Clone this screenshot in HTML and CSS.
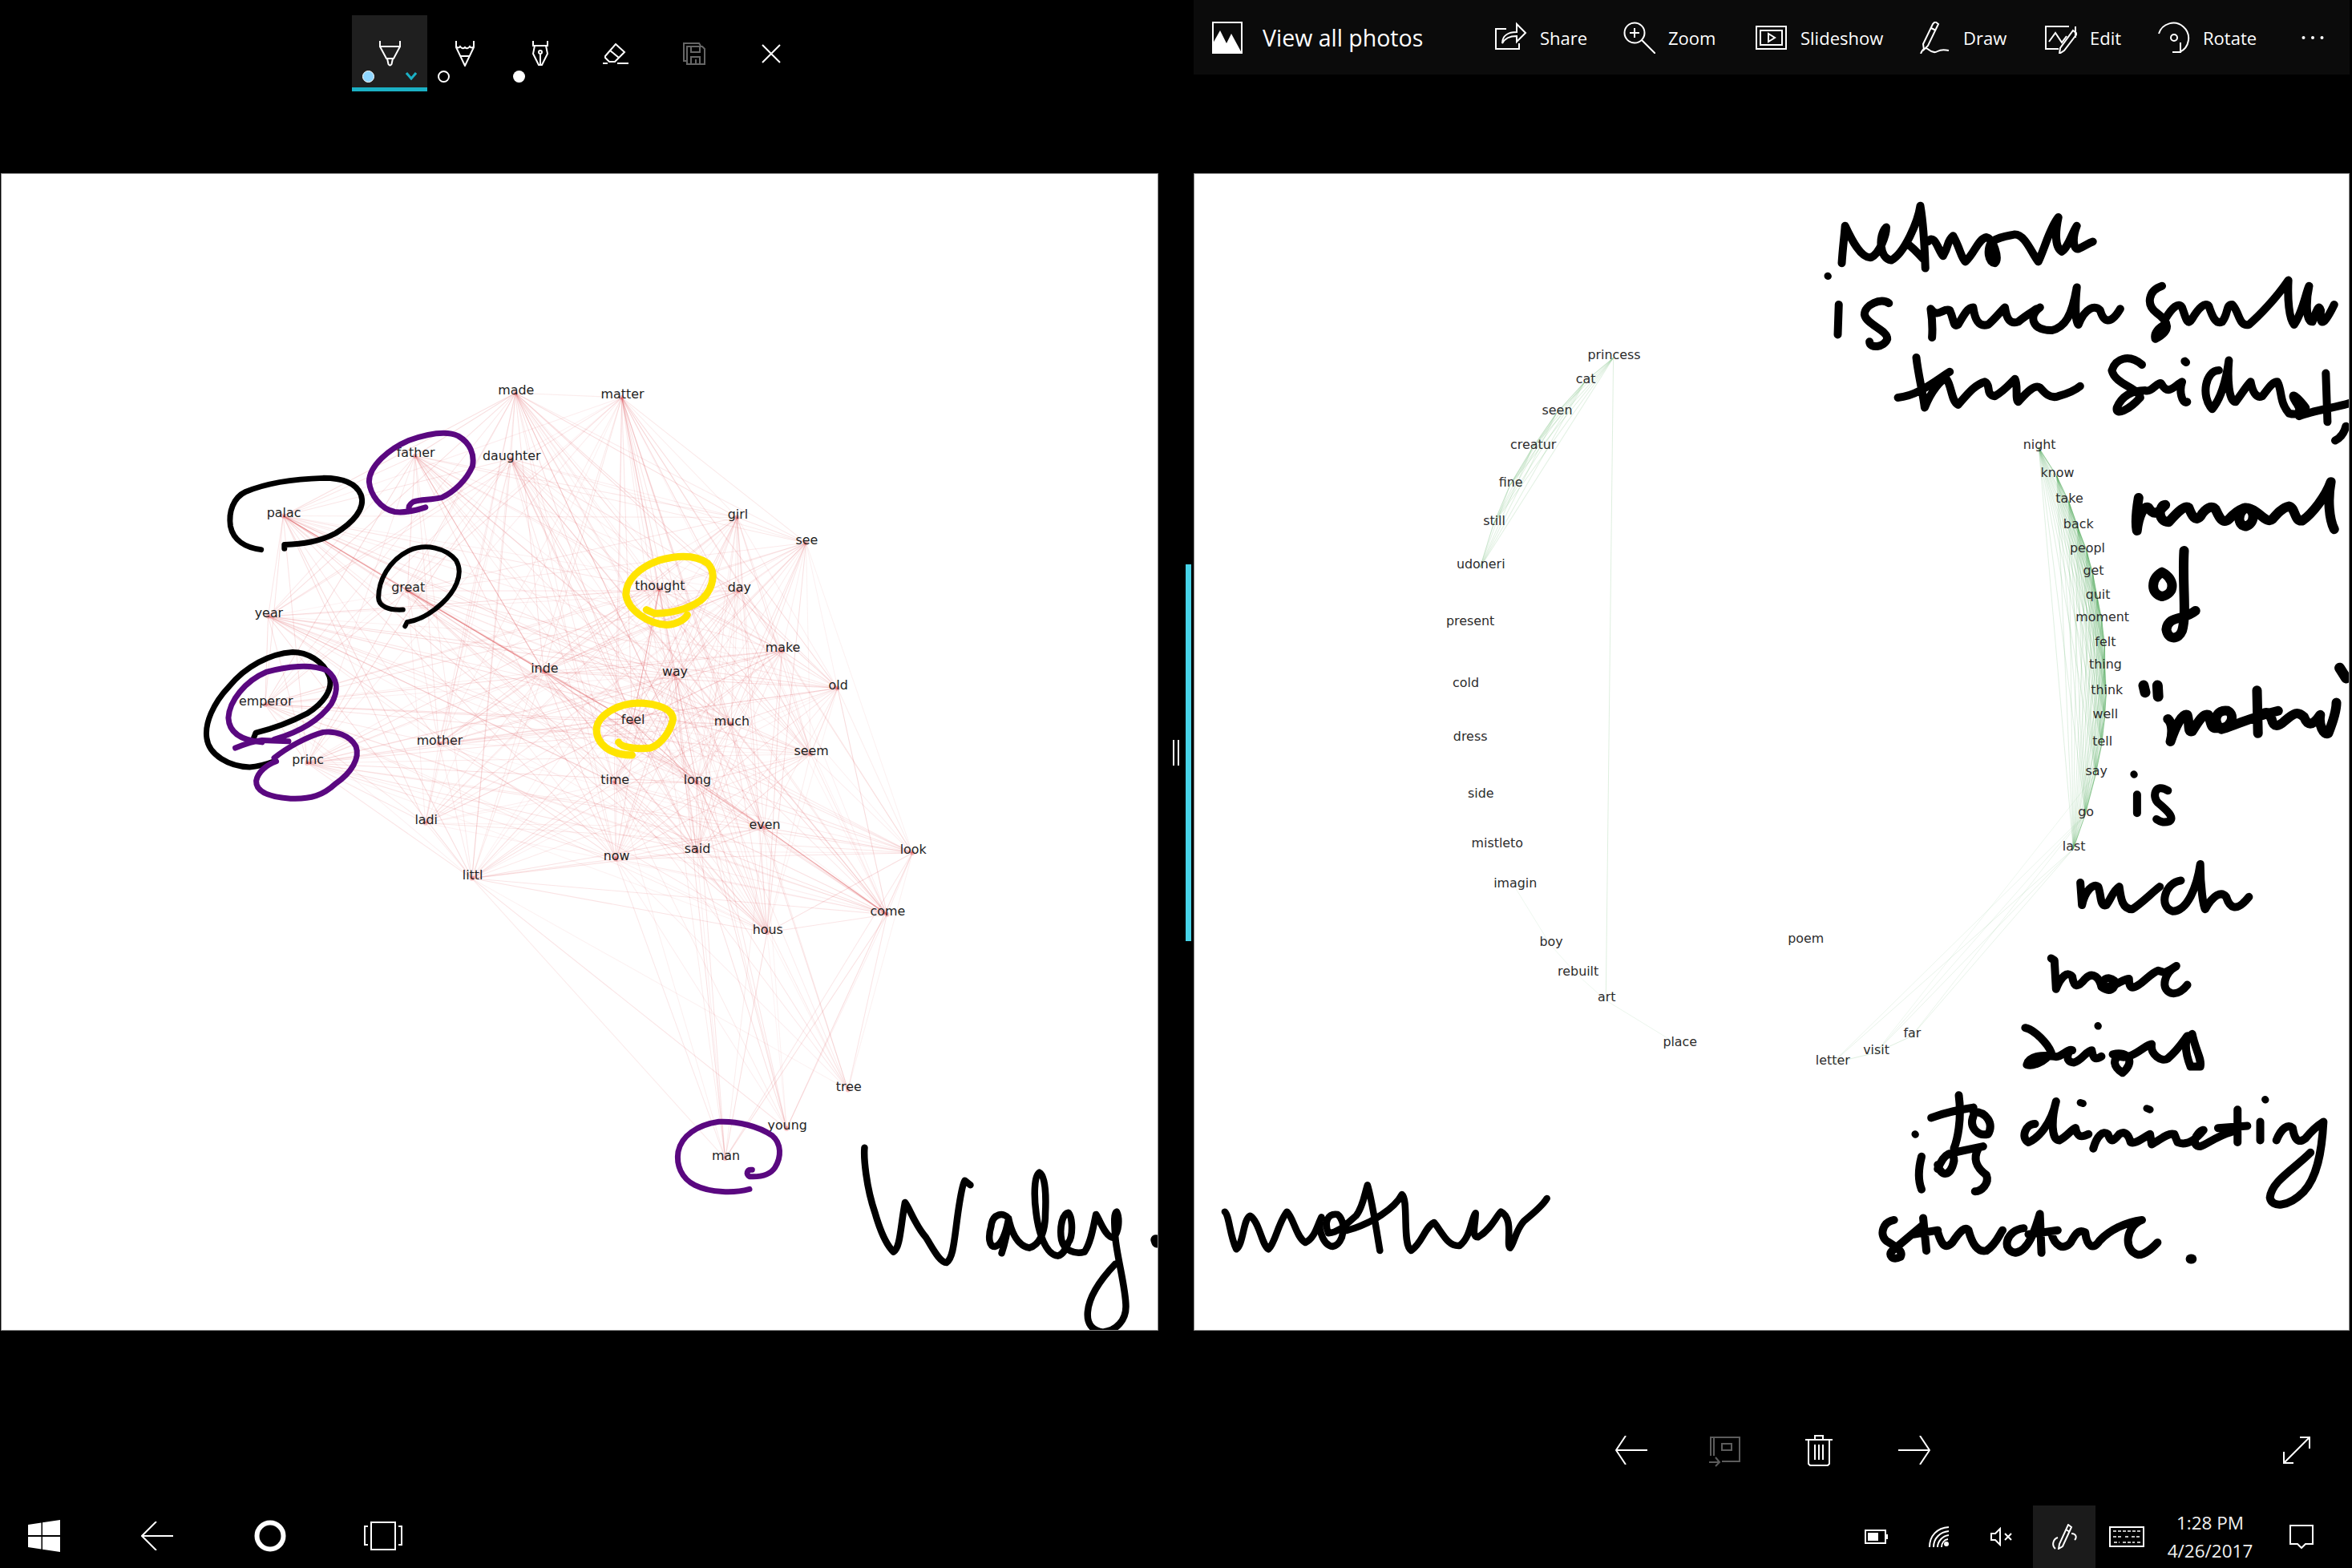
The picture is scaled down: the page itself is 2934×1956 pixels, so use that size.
FILE: index.html
```html
<!DOCTYPE html>
<html lang="en">
<head>
<meta charset="utf-8">
<title>Photos split view</title>
<link rel="stylesheet" href="styles.css">
</head>
<body>
<div class="app">
  <div class="split">
    <section class="window window-left">
      <div class="toolbar">
        <div class="inktools">
          <div class="tool tool-active">
            <svg class="ico pen" width="27" height="32" viewBox="0 0 27 32"><path d="M1 0V7H26V0M1 7L9 22H18L26 7M10 22L11.5 29Q13.5 32 15.5 29L17 22"/></svg>
            <div class="tool-row"><span class="dot dot-blue"></span><svg class="chev" width="14" height="10" viewBox="0 0 14 10"><path d="M1 1L7 8L13 1"/></svg></div>
          </div>
          <div class="tool">
            <svg class="ico pen" width="24" height="32" viewBox="0 0 24 32"><path d="M1 0V8L12 31L23 8V0M1 7Q4 10 6 7Q9 11 12 8Q15 11 18 7Q20 10 23 7M7 19H17"/></svg>
            <div class="tool-row"><span class="dot dot-ring"></span></div>
          </div>
          <div class="tool">
            <svg class="ico pen" width="20" height="32" viewBox="0 0 20 32"><path d="M1 0V6H19V0M3 6L1 16L8 30H12L19 16L17 6M10 30V17"/><circle cx="10" cy="14" r="2"/></svg>
            <div class="tool-row"><span class="dot dot-white"></span></div>
          </div>
          <div class="tool tool-plain">
            <svg class="ico" width="32" height="26" viewBox="0 0 32 26"><path d="M3 16L16 1L27 11L15 23H8L3 18ZM9 9L20 18M0 25H6M18 25H32"/></svg>
          </div>
          <div class="tool tool-plain tool-wide">
            <svg class="ico ico-off" width="28" height="28" viewBox="0 0 28 28"><path d="M4 23H1V1H20L22 4M5 5H24L27 8V27H5ZM10 5V12H21V5M10 27V18H21V27M16 21V27"/></svg>
          </div>
          <div class="tool tool-plain tool-close">
            <svg class="ico" width="24" height="24" viewBox="0 0 24 24"><path d="M1 1L23 23M23 1L1 23"/></svg>
          </div>
        </div>
      </div>
      <div class="panel">
        <svg class="graph graph-red" data-graph="red" viewBox="0.6 116 771.5 771.5">
          <g class="edges"></g>
          <text x="344" y="260">made</text><text x="415" y="263">matter</text><text x="277" y="302">father</text><text x="341" y="304">daughter</text><text x="492" y="343">girl</text><text x="189" y="342">palac</text><text x="538" y="360">see</text><text x="272" y="392">great</text><text x="440" y="391">thought</text><text x="493" y="392">day</text><text x="179" y="409">year</text><text x="522" y="432">make</text><text x="363" y="446">inde</text><text x="450" y="448">way</text><text x="559" y="457">old</text><text x="177" y="468">emperor</text><text x="422" y="480">feel</text><text x="488" y="481">much</text><text x="293" y="494">mother</text><text x="541" y="501">seem</text><text x="205" y="507">princ</text><text x="410" y="520">time</text><text x="465" y="520">long</text><text x="284" y="547">ladi</text><text x="510" y="550">even</text><text x="465" y="566">said</text><text x="609" y="567">look</text><text x="411" y="571">now</text><text x="315" y="584">littl</text><text x="592" y="608">come</text><text x="512" y="620">hous</text><text x="566" y="725">tree</text><text x="525" y="751">young</text><text x="484" y="771">man</text>
        </svg>
        <svg class="ink" viewBox="2 217 1442 1442">
          <g transform="translate(240 460) scale(.5102 .357)">
            <path class="s-purple" d="M570 484C545 495 520 505 495 500C460 490 435 440 432 395C432 340 480 280 530 250C570 230 620 215 650 235C680 260 690 300 685 340C670 390 640 430 610 450C580 460 560 455 540 465C530 475 528 485 530 492"/>
            <path class="s-black" d="M168 632C130 625 100 600 93 550C88 500 100 450 130 430C180 400 250 385 320 382C370 382 400 400 412 440C425 490 390 540 350 575C310 605 270 612 225 615L225 628"/>
            <path class="s-black s-thin" d="M515 842C480 845 455 830 455 800C455 740 480 670 530 635C570 610 620 625 645 670C665 720 640 780 610 820C580 860 550 880 525 885L520 900"/>
            <path class="s-yellow" d="M1110 842L1130 855C1180 855 1230 830 1250 800C1275 760 1280 710 1260 680C1230 650 1190 650 1140 670C1090 695 1060 740 1060 790C1065 840 1110 890 1160 895C1185 893 1205 875 1210 860"/>
            <path class="s-yellow" d="M1042 1305C1050 1325 1090 1330 1120 1325C1150 1310 1170 1260 1175 1225C1175 1190 1140 1170 1090 1168C1040 1170 990 1210 988 1260C988 1310 1020 1350 1075 1350"/>
            <path class="s-black" d="M150 1290L155 1272C190 1260 240 1235 280 1205C320 1170 345 1120 335 1075C320 1020 280 990 245 990C190 995 130 1040 90 1110C50 1170 30 1240 35 1290C40 1350 90 1390 140 1392C165 1390 185 1380 200 1372"/>
            <path class="s-purple" d="M105 1325C130 1310 150 1300 170 1298L235 1302M170 1305C130 1300 90 1280 88 1220C90 1160 130 1090 180 1060C230 1040 290 1030 330 1055C360 1090 355 1130 340 1170C310 1230 260 1270 200 1295"/>
            <path class="s-purple" d="M205 1372C180 1385 160 1410 156 1440C155 1470 175 1495 240 1502C290 1505 320 1490 350 1450C390 1410 410 1360 400 1320C385 1280 350 1265 320 1270C280 1285 230 1325 200 1360"/>
          </g>
          <g transform="translate(820 1370) scale(.3333)">
            <path class="s-purple" d="M345 340C290 355 200 355 140 325C90 300 70 250 78 200C90 140 150 100 230 88C300 85 380 105 430 140C465 170 465 220 440 260C420 290 380 295 345 293C330 285 335 265 355 268"/>
          </g>
          <g transform="translate(1040 1380) scale(.574 .3333)">
            <path class="s-hand" d="M67 155C65 190 70 300 90 400C100 460 115 520 130 545C145 530 145 450 155 360C165 380 175 440 200 490C215 530 230 585 245 585C260 570 262 500 270 400C275 340 280 290 285 278L297 295"/>
            <path class="s-hand" d="M380 420C370 395 345 400 342 450C335 490 338 525 350 525C365 520 375 470 380 420C380 460 370 525 365 550M380 420C385 460 395 520 425 530C445 520 460 480 460 400C462 330 460 260 447 248C435 260 435 340 440 400C445 470 460 555 487 560C500 555 505 530 510 510C520 490 520 420 510 398C498 400 490 450 495 500C500 540 525 555 545 545C560 510 565 440 570 405C580 430 590 490 608 492C620 470 622 420 615 395C608 400 610 440 612 490C615 560 635 680 635 750C635 800 615 840 585 845C560 840 550 810 552 770C555 700 590 630 612 590"/>
            <path class="s-hand s-fat" d="M700 500L702 510"/>
          </g>
        </svg>
      </div>
    </section>

    <div class="divider"><span class="handle"></span><span class="accent"></span></div>

    <section class="window window-right">
      <div class="toolbar">
        <nav class="photobar">
          <div class="bar-item item-home">
            <svg class="barico" width="38" height="40" viewBox="0 0 38 40"><path d="M1 1H37V39H1Z"/><path class="fill" d="M1 39V27L10 11L18 27L24 15L37 39Z"/></svg>
            <span class="home-label">View all photos</span>
          </div>
          <div class="bar-item item-share">
            <svg class="barico" width="40" height="40" viewBox="0 0 40 40"><path d="M14 9H1V34H30V27M9 27C9 17 17 13 27 13V3L38 14L27 25V18C18 18 12 21 9 27Z"/></svg>
            <span>Share</span>
          </div>
          <div class="bar-item item-zoom">
            <svg class="barico" width="40" height="40" viewBox="0 0 40 40"><circle cx="14" cy="14" r="12.5"/><path d="M14 8V20M8 14H20M23 23L40 40"/></svg>
            <span>Zoom</span>
          </div>
          <div class="bar-item item-slide">
            <svg class="barico" width="40" height="40" viewBox="0 0 40 40"><path d="M1 6H38V34H1ZM6 11H33V29H6ZM16 15L24 20L16 25Z"/></svg>
            <span>Slideshow</span>
          </div>
          <div class="bar-item item-draw">
            <svg class="barico" width="40" height="40" viewBox="0 0 40 40"><path d="M18 3L21 0L25 3L12 30L7 35L6 28ZM16 8L22 11M3 40Q7 30 13 35T24 37T38 36"/></svg>
            <span>Draw</span>
          </div>
          <div class="bar-item item-edit">
            <svg class="barico" width="40" height="40" viewBox="0 0 40 40"><path d="M30 6H1V34H17M38 6V20M5 25L13 14L21 26L27 18M35 11L40 15L24 36L18 40L19 33Z"/></svg>
            <span>Edit</span>
          </div>
          <div class="bar-item item-rotate">
            <svg class="barico" width="40" height="40" viewBox="0 0 40 40"><path d="M1 15A19 19 0 1 1 27 38M28 26V38H18"/><circle cx="20" cy="20" r="4"/></svg>
            <span>Rotate</span>
          </div>
          <svg class="more" width="28" height="6" viewBox="0 0 28 6"><circle cx="2.5" cy="3" r="2"/><circle cx="14" cy="3" r="2"/><circle cx="25.5" cy="3" r="2"/></svg>
        </nav>
      </div>
      <div class="panel">
        <svg class="graph graph-green" data-graph="green" viewBox="795.8 116 770.7 770.7">
          <g class="edges"></g>
          <text x="1076" y="236">princess</text><text x="1057" y="252">cat</text><text x="1038" y="273">seen</text><text x="1022" y="296">creatur</text><text x="1007" y="321">fine</text><text x="996" y="347">still</text><text x="987" y="376">udoneri</text><text x="980" y="414">present</text><text x="977" y="455">cold</text><text x="980" y="491">dress</text><text x="987" y="529">side</text><text x="998" y="562">mistleto</text><text x="1010" y="589">imagin</text><text x="1034" y="628">boy</text><text x="1052" y="648">rebuilt</text><text x="1071" y="665">art</text><text x="1120" y="695">place</text><text x="1204" y="626">poem</text><text x="1222" y="707">letter</text><text x="1251" y="700">visit</text><text x="1275" y="689">far</text><text x="1383" y="564">last</text><text x="1391" y="541">go</text><text x="1398" y="514">say</text><text x="1402" y="494">tell</text><text x="1404" y="476">well</text><text x="1405" y="460">think</text><text x="1404" y="443">thing</text><text x="1404" y="428">felt</text><text x="1402" y="411">moment</text><text x="1399" y="396">quit</text><text x="1396" y="380">get</text><text x="1392" y="365">peopl</text><text x="1386" y="349">back</text><text x="1380" y="332">take</text><text x="1372" y="315">know</text><text x="1360" y="296">night</text>
        </svg>
        <svg class="ink" viewBox="1490 217 1440 1442">
          <g transform="translate(1040 1380) scale(.574 .3333)">
            <path class="s-hand" d="M850 395C860 410 860 480 875 535C890 520 890 420 905 410C925 430 930 520 945 535C960 510 965 440 985 395C1000 420 1005 490 1025 510C1045 495 1050 450 1060 415C1050 440 1060 520 1085 525C1110 515 1115 430 1095 405C1075 400 1065 430 1075 475C1100 470 1115 440 1135 410C1150 380 1155 320 1160 295C1170 350 1180 470 1187 540M1115 465C1170 440 1220 380 1235 330C1250 350 1235 520 1255 540C1280 510 1285 450 1305 435C1325 480 1335 525 1360 522C1385 490 1385 420 1395 400C1395 440 1385 490 1400 490C1430 460 1440 410 1450 395C1480 420 1460 520 1470 530C1480 510 1480 470 1500 430C1525 395 1545 360 1550 345"/>
          </g>
          <g transform="translate(2280 230) scale(.417 .357)">
            <path class="s-ink" d="M42 275C45 220 50 180 52 145C70 190 100 260 130 255C155 240 175 180 175 150C150 180 155 260 190 265C230 240 270 130 277 75C285 130 290 220 292 293M235 205C255 220 270 240 285 260M300 200C320 170 330 230 345 250C365 210 355 200 375 180C395 220 400 260 412 270C440 240 450 190 475 185C495 190 515 260 500 275C480 270 475 230 490 200C520 180 540 180 560 175C590 175 610 240 630 270C650 220 665 150 690 115C680 170 680 220 700 235C720 220 730 170 745 145C730 190 735 230 750 225C770 215 780 205 793 200"/>
            <path class="s-ink" d="M33 420L30 525M183 415C160 395 110 420 110 455C115 490 180 510 178 540C170 570 125 575 125 550"/>
            <path class="s-ink" d="M312 535C315 490 310 450 308 435C330 470 345 430 365 440C380 480 375 500 390 490C410 450 420 430 435 430C440 470 450 500 480 490C500 470 520 440 530 430C535 470 545 490 570 480C590 460 605 450 625 435M635 430C600 460 610 510 670 510C710 500 730 460 745 360C740 420 740 480 750 490C770 430 800 420 815 440C825 480 845 495 875 435"/>
            <path class="s-ink" d="M1000 355C960 370 950 420 985 450C1020 480 1030 510 980 540C975 520 990 500 1010 490M1010 470C1030 430 1050 410 1060 430C1070 460 1075 500 1090 470C1110 430 1130 410 1140 425C1150 460 1160 490 1180 480C1200 450 1190 420 1210 420C1230 440 1230 500 1260 490C1290 460 1340 400 1378 335C1375 400 1380 470 1395 490C1420 450 1430 380 1440 355C1430 410 1430 480 1450 480C1465 430 1470 420 1475 440C1470 510 1490 480 1515 420"/>
            <path class="s-ink" d="M210 745C270 740 330 680 365 655M265 605C270 660 285 730 290 780C310 720 340 680 355 680C370 700 370 760 390 770C420 730 440 700 470 690C490 700 470 735 500 740C530 720 550 690 560 680C570 700 560 750 570 760C600 720 620 700 635 710C650 730 665 750 690 740C720 730 740 720 755 705"/>
            <path class="s-ink" d="M940 630C900 590 860 610 850 650C860 700 930 710 935 745C900 790 860 810 865 780C880 740 910 720 950 720C970 730 990 680 1000 700C1020 740 1040 700 1060 690C1050 720 1060 770 1075 760M1068 618L1072 622M1170 650C1130 650 1115 740 1150 785C1175 750 1190 700 1200 615C1195 680 1200 760 1220 760C1240 730 1255 700 1265 690C1270 720 1280 750 1300 740C1320 710 1330 690 1345 690C1360 720 1350 760 1380 800C1410 810 1420 790 1400 760C1385 735 1390 720 1430 780M1490 660L1495 830M1410 810C1450 790 1520 780 1560 765M1550 845C1545 870 1535 885 1518 895"/>
            <path class="s-ink s-heavy" d="M930 1095C925 1130 920 1180 925 1210C930 1160 945 1120 960 1130C980 1170 1000 1130 1010 1120C990 1120 985 1180 1020 1180C1050 1140 1070 1120 1080 1130C1090 1160 1100 1180 1115 1160C1130 1130 1150 1120 1160 1135C1170 1160 1180 1190 1200 1170C1215 1150 1230 1135 1250 1130C1280 1135 1280 1185 1250 1195C1225 1190 1225 1150 1250 1130C1285 1130 1310 1190 1330 1170C1345 1150 1360 1130 1380 1125C1400 1130 1395 1180 1420 1175C1450 1150 1490 1090 1505 1040C1495 1100 1500 1170 1515 1205"/>
            <path class="s-ink s-heavy" d="M1000 1355C965 1380 965 1430 1000 1440C1040 1430 1040 1380 1000 1355"/>
            <path class="s-ink s-heavy" d="M1066 1280C1060 1400 1075 1500 1060 1560C1050 1590 1018 1595 1013 1555C1018 1505 1065 1525 1100 1490"/>
            <path class="s-dot" d="M0 320L1 321"/>
          </g>
          <g transform="translate(2300 800) scale(.4043 .5102)">
            <path class="s-ink s-fat" d="M925 108L930 125M968 108L970 135M1530 65L1550 90"/>
            <path class="s-ink s-heavy" d="M1000 190C1015 200 1015 225 1008 245C1025 205 1045 175 1060 180C1068 200 1060 225 1075 220C1095 195 1110 175 1125 180C1135 200 1130 215 1155 212C1195 215 1210 180 1185 170C1150 165 1135 195 1165 215C1190 210 1260 185 1340 170M1275 120L1278 225M1280 185C1300 170 1310 170 1320 190C1325 210 1340 210 1360 195C1390 175 1400 170 1420 185C1430 205 1445 210 1470 180C1465 205 1480 230 1495 225C1510 195 1520 170 1520 150"/>
            <path class="s-ink" d="M905 375L905 420M1000 365C960 345 950 380 970 395C1000 415 1020 430 1005 440C985 445 975 440 965 435"/>
            <path class="s-dot" d="M895 325L896 326"/>
            <path class="s-ink" d="M730 590L735 645C745 610 770 590 785 600C795 620 790 650 810 645C825 630 830 610 850 600C855 630 860 655 890 655C920 640 950 615 975 600M1040 585C990 590 970 650 1015 660C1060 660 1090 600 1100 545C1100 600 1110 650 1115 655C1140 620 1165 610 1180 625C1190 650 1210 665 1250 625"/>
            <path class="s-ink" d="M640 775L650 780L655 850C670 820 690 805 705 820C710 845 720 850 745 825C770 805 790 825 795 845C820 860 840 850 835 830C815 815 790 830 800 845C830 850 860 825 880 825C880 850 890 850 910 840C930 830 950 810 970 805L990 810C1020 800 1030 790 1025 795C990 810 975 850 1010 860C1030 865 1050 850 1060 840"/>
            <path class="s-ink" d="M560 945C590 950 630 985 640 1005C620 1030 580 1040 565 1035C570 1015 610 1010 650 1015C670 1020 690 995 705 1000C690 1000 680 1030 710 1030C735 1025 750 1000 765 1000C770 1020 775 1025 795 1015M830 1010C880 1000 900 1030 860 1055C830 1040 830 1020 850 1015C890 1025 930 985 950 985C945 1010 980 1030 1000 1020C1030 1000 1050 975 1060 965C1050 990 1060 1020 1070 1040L1100 1040C1105 1020 1085 1000 1075 960"/>
            <path class="s-dot" d="M784 940L785 941M220 1205L221 1206M730 1128L738 1130M935 1142L945 1145M1300 1120L1301 1121"/>
            <path class="s-ink" d="M240 1260C230 1290 230 1320 240 1340M270 1165C320 1150 360 1145 400 1140M355 1110C365 1170 350 1220 340 1240M400 1150C440 1150 465 1180 445 1205C415 1210 385 1190 400 1160M290 1290C310 1250 340 1240 340 1270C330 1310 300 1310 290 1280M340 1250C370 1245 400 1240 430 1235M415 1240C395 1270 415 1290 440 1305C450 1325 425 1345 405 1345"/>
            <path class="s-ink" d="M590 1180C560 1180 545 1215 570 1225C600 1215 640 1180 655 1125C640 1170 640 1220 665 1220C690 1210 700 1195 715 1190C720 1210 730 1215 755 1205M770 1240C780 1210 800 1195 815 1205C825 1225 830 1225 850 1205C870 1195 880 1210 885 1225C900 1230 920 1215 945 1205L950 1230C975 1220 1000 1200 1020 1205L1030 1225C1060 1235 1090 1215 1110 1195C1085 1200 1070 1235 1100 1235C1120 1230 1150 1210 1195 1200M1215 1145L1215 1225M1155 1190L1245 1185M1285 1175L1285 1220M1335 1220C1350 1190 1370 1180 1385 1190C1390 1215 1400 1230 1425 1215C1450 1190 1470 1180 1480 1175C1475 1250 1460 1310 1420 1345C1370 1385 1320 1385 1315 1360C1320 1320 1390 1290 1440 1250"/>
            <path class="s-ink" d="M155 1415C120 1420 110 1450 130 1465C160 1480 185 1490 175 1505C150 1515 135 1500 150 1490C180 1470 210 1450 240 1430M245 1410L255 1490M215 1450L290 1440M290 1445C300 1470 310 1490 335 1470C360 1440 375 1430 385 1440C395 1470 410 1495 440 1490C470 1475 480 1450 490 1440M555 1435C500 1440 485 1490 530 1495C570 1490 590 1440 605 1400L610 1495M570 1450L660 1440M640 1445C650 1480 680 1490 700 1470C720 1440 730 1440 745 1445C750 1480 770 1490 790 1465C820 1440 870 1420 920 1415C870 1430 860 1490 910 1500C930 1500 950 1485 968 1470"/>
            <path class="s-dot s-period" d="M1070 1510L1074 1510"/>
          </g>
        </svg>
      </div>
      <div class="actions">
        <svg class="barico act" width="40" height="36" viewBox="0 0 40 36"><path d="M40 18H2M13 0L1 18L13 36"/></svg>
        <svg class="barico act act-off" width="40" height="36" viewBox="0 0 40 36"><path d="M2 25V2H38V32H16M6 2V25M16 10H28V18H16ZM0 33H12M8 27L13 33L8 38"/></svg>
        <svg class="barico act" width="34" height="40" viewBox="0 0 34 40"><path d="M0 7H34M12 7V2H22V7M4 7V37L6 39H28L30 37V7M12 13V32M17 13V32M22 13V32"/></svg>
        <svg class="barico act" width="40" height="36" viewBox="0 0 40 36"><path d="M0 18H38M27 0L39 18L27 36"/></svg>
        <svg class="barico expand" width="36" height="36" viewBox="0 0 36 36"><path d="M2 34L34 2M22 2H34V16M2 20V34H14"/></svg>
      </div>
    </section>
  </div>

  <footer class="taskbar">
    <div class="task-left">
      <svg class="task-ico" width="40" height="40" viewBox="0 0 40 40"><path class="fill-solid" d="M0 6L16.5 3.5V19H0ZM18 3.2L40 0V19H18ZM0 21H16.5V36.5L0 34ZM18 21H40V40L18 36.8Z"/></svg>
      <svg class="barico task-ico" width="40" height="36" viewBox="0 0 40 36"><path d="M40 18H2M19 0L1 18L19 36"/></svg>
      <svg class="task-ico cortana" width="40" height="40" viewBox="0 0 40 40"><circle cx="20" cy="20" r="16.5"/></svg>
      <svg class="barico task-view" width="48" height="36" viewBox="0 0 48 36"><path d="M9 1H39V35H9ZM5 6H1V29H5M43 6H47V29H43"/></svg>
    </div>
    <div class="task-right">
      <div class="tray"><svg class="barico" width="30" height="18" viewBox="0 0 30 18"><path d="M1 1H26V17H1Z"/><path class="fill" d="M4 4H17V14H4ZM27 6H29V12H27Z"/></svg></div>
      <div class="tray"><svg class="barico" width="26" height="26" viewBox="0 0 26 26"><path d="M1 26C1 12 10 2 25 1M6 26C6 15 14 7 25 6M11 26C11 19 17 12 25 11M16 26C16 21 19 17 24 16"/><circle class="fill" cx="22" cy="22" r="3"/></svg></div>
      <div class="tray"><svg class="barico" width="28" height="24" viewBox="0 0 28 24"><path d="M1 8H6L12 2V22L6 16H1ZM18 8L26 16M26 8L18 16"/></svg></div>
      <div class="tray tray-on"><svg class="barico" width="32" height="32" viewBox="0 0 32 32"><path d="M21 1L25 4L14 28L9 31L10 25ZM18 7L23 10M25 12C31 12 32 17 29 20M8 17C2 19 0 27 5 31"/></svg></div>
      <div class="tray"><svg class="barico" width="44" height="26" viewBox="0 0 44 26"><path d="M1 1H43V25H1Z"/><path class="dash" d="M5 6H39M5 13H16M20 13H24M28 13H39M6 20H13M17 20H32M35 20H39"/></svg></div>
      <div class="clock"><span>1:28 PM</span><span>4/26/2017</span></div>
      <div class="tray tray-note"><svg class="barico" width="30" height="30" viewBox="0 0 30 30"><path d="M1 1H29V24H20L15 29L10 24H1Z"/></svg></div>
    </div>
  </footer>
</div>
<script src="graph.js"></script>
</body>
</html>
```
FILE: styles.css
```css
* { box-sizing: border-box; }
html, body { margin: 0; padding: 0; background: #000; }
body { font-family: "Open Sans", "Noto Sans", sans-serif; color: #fff; }
.app { width: 2934px; height: 1956px; display: flex; flex-direction: column; overflow: hidden; background: #000; }
.split { display: flex; height: 1878px; }

.window { display: flex; flex-direction: column; }
.window-left { width: 1445px; padding-left: 1px; }
.window-right { width: 1445px; padding-right: 3px; }
.toolbar { height: 216px; flex: none; }

.panel { position: relative; flex: none; height: 1444px; background: #fff; border: 1px solid #8a8a8a; overflow: hidden; }
.graph { display: block; width: 100%; height: 100%; }
.graph text { font-family: "DejaVu Sans", sans-serif; font-size: 8.5px; text-anchor: middle; dominant-baseline: central; fill: #1e1e1e; }
.graph-green text { fill: #2c2c2c; }
.ink { position: absolute; left: 0; top: 0; width: 100%; height: 100%; pointer-events: none; }
.ink path { fill: none; stroke-linecap: round; stroke-linejoin: round; vector-effect: non-scaling-stroke; }
.s-black { stroke: #000; stroke-width: 7px; }
.s-thin { stroke-width: 6px; }
.s-hand { stroke: #000; stroke-width: 8.5px; }
.s-purple { stroke: #5a0880; stroke-width: 7px; }
.s-yellow { stroke: #ffe400; stroke-width: 9px; }
.s-ink { stroke: #000; stroke-width: 10px; }
.s-heavy { stroke-width: 12px; }
.s-fat { stroke-width: 13px; }
.s-dot { stroke: #000; stroke-width: 9px; }
.s-period { stroke-width: 12px; }

/* ink tools */
.inktools { display: flex; padding: 19px 0 0 438px; }
.tool { width: 94px; height: 95px; display: flex; flex-direction: column; align-items: center; padding-top: 32px; }
.tool-active { background: #1f1f1f; border-bottom: 5px solid #1bb0c4; }
.tool-plain { padding-top: 0; justify-content: center; }
.tool-wide { width: 102px; }
.tool-close { width: 90px; }
.tool-row { align-self: stretch; display: flex; justify-content: space-between; align-items: center; margin-top: 5px; padding: 0 13px; height: 14px; }
.ico { fill: none; stroke: #fff; stroke-width: 2; flex: none; }
.ico-off { stroke: #666; }
.dot { width: 15px; height: 15px; border-radius: 50%; display: block; }
.dot-blue { background: #8fd6ff; border: 1px solid #fff; }
.dot-ring { border: 2px solid #fff; }
.dot-white { background: #fff; }
.chev { fill: none; stroke: #1bb0c4; stroke-width: 3; }

/* photos bar */
.photobar { height: 93px; background: #0b0b0b; display: flex; align-items: center; padding: 0 0 0 23px; font-size: 22px; }
.bar-item { display: flex; align-items: center; gap: 16px; flex: none; }
.item-home { width: 353px; gap: 25px; }
.home-label { font-size: 28.5px; }
.item-share { width: 160px; }
.item-zoom { width: 165px; }
.item-slide { width: 203px; }
.item-draw { width: 158px; }
.item-edit { width: 141px; }
.item-rotate { width: 179px; }
.barico { fill: none; stroke: #fff; stroke-width: 2; flex: none; }
.barico .fill { fill: #fff; stroke: none; }
.more { fill: #fff; }

/* bottom actions */
.actions { flex: 1; display: flex; align-items: center; padding: 0 48px 0 526px; margin-top: 79px; }
.act { margin-right: 77px; }
.act:nth-child(3) { margin-left: 3px; margin-right: 82px; }
.act-off { stroke: #5c5c5c; overflow: visible; }
.expand { margin-left: auto; }

/* divider */
.divider { width: 44px; display: flex; align-items: center; padding-left: 18px; }
.handle { width: 8px; height: 32px; border-left: 2px solid #fff; border-right: 2px solid #fff; }
.accent { width: 7px; height: 470px; margin-left: 8px; background: #47d3e8; }

/* task bar */
.taskbar { height: 78px; flex: none; display: flex; justify-content: space-between; }
.task-left { display: flex; align-items: center; gap: 101px; padding: 0 0 2px 35px; }
.task-ico { flex: none; }
.fill-solid { fill: #fff; }
.cortana { fill: none; stroke: #fff; stroke-width: 6; }
.task-view { margin-left: -4px; }
.task-right { display: flex; padding-right: 14px; }
.tray { width: 78px; height: 78px; display: flex; align-items: center; justify-content: center; }
.tray-on { background: #1b1b1b; }
.tray-note { width: 98px; }
.dash { stroke-dasharray: 4 2; stroke-width: 1.6; }
.clock { width: 130px; display: flex; flex-direction: column; align-items: center; justify-content: center; font-size: 22.5px; line-height: 35px; color: #f0f0f0; }
```
FILE: graph.js
```js
// Draws the network edges between the labelled nodes of each graph.
(function () {
  var NS = 'http://www.w3.org/2000/svg';
  var seed = 12345;
  function rnd() { seed = (seed * 1103515245 + 12345) % 2147483648; return seed / 2147483648; }

  function line(group, a, b, colour, alpha, width) {
    var l = document.createElementNS(NS, 'line');
    l.setAttribute('x1', a.x); l.setAttribute('y1', a.y);
    l.setAttribute('x2', b.x); l.setAttribute('y2', b.y);
    l.setAttribute('stroke', colour);
    l.setAttribute('stroke-opacity', alpha);
    l.setAttribute('stroke-width', width);
    group.appendChild(l);
  }

  function load(svg) {
    var nodes = {}, list = [];
    svg.querySelectorAll('text').forEach(function (t) {
      var n = { x: +t.getAttribute('x') - 0.5, y: +t.getAttribute('y') + 2.2, name: t.textContent };
      nodes[n.name] = n; list.push(n);
    });
    return { nodes: nodes, list: list, group: svg.querySelector('.edges') };
  }

  // Red graph: a dense, nearly complete network.
  var red = load(document.querySelector('[data-graph="red"]'));
  var sparse = { man: 1, young: 1, tree: 1 };
  var reachable = { come: 1, look: 1, hous: 1, even: 1, said: 1, long: 1, now: 1, littl: 1, time: 1, matter: 1, way: 1 };
  for (var i = 0; i < red.list.length; i++) {
    for (var j = i + 1; j < red.list.length; j++) {
      var a = red.list[i], b = red.list[j];
      var r = rnd();
      if (sparse[a.name] || sparse[b.name]) {
        var other = sparse[a.name] ? b : a;
        if (sparse[other.name] || !reachable[other.name]) continue;
      } else if (r < 0.14) {
        continue;
      }
      line(red.group, a, b, '#dc4a50', 0.07 + rnd() * 0.12, 0.55);
    }
  }
  [['palac', 'great'], ['great', 'inde'], ['inde', 'feel'], ['feel', 'long'], ['great', 'feel'], ['palac', 'inde'], ['father', 'inde'], ['thought', 'feel'], ['long', 'even'], ['even', 'come']].forEach(function (p) {
    line(red.group, red.nodes[p[0]], red.nodes[p[1]], '#dc4a50', 0.28, 0.6);
  });
  red.list.forEach(function (n) {
    var c = document.createElementNS(NS, 'circle');
    c.setAttribute('cx', n.x); c.setAttribute('cy', n.y); c.setAttribute('r', 1.6);
    c.setAttribute('fill', '#e8555a'); c.setAttribute('fill-opacity', 0.35);
    red.group.appendChild(c);
  });

  // Green graph: two small cliques and a few stray links.
  var green = load(document.querySelector('[data-graph="green"]'));
  var G = '#4aa652';
  function clique(names, alpha, chain, width) {
    names.forEach(function (x, i) {
      names.forEach(function (y, j) {
        if (j > i) line(green.group, green.nodes[x], green.nodes[y], G, j === i + 1 ? chain : alpha, width);
      });
    });
  }
  clique(['princess', 'cat', 'seen', 'creatur', 'fine', 'still', 'udoneri'], 0.16, 0.3, 0.55);
  clique(['night', 'know', 'take', 'back', 'peopl', 'get', 'quit', 'moment', 'felt', 'thing', 'think', 'well', 'tell', 'say', 'go', 'last'], 0.17, 0.6, 0.55);
  [['princess', 'art', 0.2], ['last', 'letter', 0.14], ['go', 'letter', 0.12], ['last', 'visit', 0.14], ['go', 'visit', 0.12], ['say', 'visit', 0.1], ['last', 'far', 0.14], ['go', 'far', 0.12], ['letter', 'visit', 0.2], ['visit', 'far', 0.2], ['imagin', 'boy', 0.1], ['boy', 'rebuilt', 0.1], ['rebuilt', 'art', 0.1], ['art', 'place', 0.12]].forEach(function (p) {
    line(green.group, green.nodes[p[0]], green.nodes[p[1]], G, p[2], 0.5);
  });
})();
```
